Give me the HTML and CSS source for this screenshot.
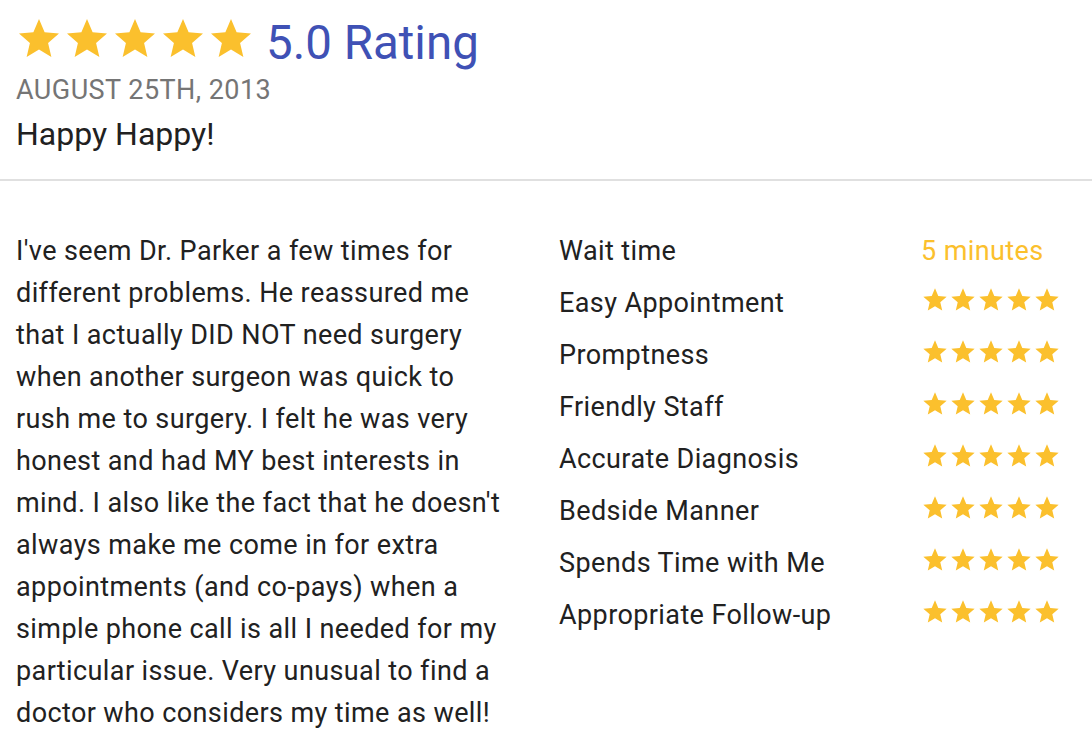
FILE: index.html
```html
<!DOCTYPE html>
<html lang="en">
  <head>
    <meta charset="UTF-8" />
    <meta name="viewport" content="width=device-width, initial-scale=1.0" />
    <title>Review</title>
    <link rel="stylesheet" href="styles.css">
  </head>
  <body>
    <!-- star icon used everywhere -->
    <svg class="defs" width="0" height="0">
      <symbol id="star" viewBox="0 0 24 24">
        <path d="M12 17.27L18.18 21l-1.64-7.03L22 9.24l-7.19-.61L12 2 9.19 8.63 2 9.24l5.46 4.73L5.82 21z" />
      </symbol>
    </svg>

    <div class="review-head">
      <div class="rating">
        <div class="stars big">
          <svg><use href="#star" /></svg>
          <svg><use href="#star" /></svg>
          <svg><use href="#star" /></svg>
          <svg><use href="#star" /></svg>
          <svg><use href="#star" /></svg>
        </div>
        <span class="rating-text">5.0 Rating</span>
      </div>
      <div class="date">AUGUST 25TH, 2013</div>
      <h2 class="title">Happy Happy!</h2>
    </div>

    <div class="review-body">
      <p class="comment">
        I've seem Dr. Parker a few times for different problems. He reassured me that I actually DID NOT need surgery when another surgeon was quick to rush me to surgery. I felt he was very honest and had MY best interests in mind. I also like the fact that he doesn't always make me come in for extra appointments (and co-pays) when a simple phone call is all I needed for my particular issue. Very unusual to find a doctor who considers my time as well!
      </p>

      <div class="scores" id="scores">
        <div class="label">Wait time</div>
        <div class="value">5 minutes</div>
      </div>
    </div>

    <script>
      document.addEventListener("DOMContentLoaded", function () {
        const scores = [
          ["Easy Appointment", 5],
          ["Promptness", 5],
          ["Friendly Staff", 5],
          ["Accurate Diagnosis", 5],
          ["Bedside Manner", 5],
          ["Spends Time with Me", 5],
          ["Appropriate Follow-up", 5],
        ];
        const list = document.getElementById("scores");

        scores.forEach(([name, count]) => {
          const label = document.createElement("div");
          label.classList.add("label");
          label.textContent = name;

          const stars = document.createElement("div");
          stars.classList.add("stars", "small");
          let html = "";
          for (let i = 0; i < count; i++) {
            html += '<svg><use href="#star" /></svg>';
          }
          stars.innerHTML = html;

          list.appendChild(label);
          list.appendChild(stars);
        });
      });
    </script>
  </body>
</html>
```

FILE: styles.css
```css
body {
  font-family: Roboto, "Noto Sans", sans-serif;
  margin: 0;
  padding: 0;
  background-color: #fff;
  color: #212121;
}

.defs {
  position: absolute;
}

.stars {
  display: flex;
  fill: #fbc02d;
}

.stars.big svg {
  width: 48px;
  height: 48px;
}

.stars.small svg {
  width: 28px;
  height: 28px;
}

.review-head {
  padding: 15px 16px 25px 15px;
  border-bottom: 2px solid #e0e0e0;
}

.rating {
  display: flex;
  align-items: flex-start;
}

.rating-text {
  margin-left: 11px;
  font-size: 47.5px;
  line-height: 56px;
  color: #3f51b5;
}

.date {
  margin-top: 3px;
  margin-left: 1px;
  font-size: 27px;
  line-height: 32px;
  letter-spacing: 0.45px;
  color: #757575;
}

.title {
  margin: 8px 0 0 1px;
  font-size: 32px;
  line-height: 40px;
  font-weight: 400;
}

.review-body {
  display: grid;
  grid-template-columns: 490px 502px;
  column-gap: 53px;
  padding: 49px 16px 0;
}

.comment {
  margin: 0;
  font-size: 27px;
  line-height: 42px;
  letter-spacing: 0.4px;
}

.scores {
  display: grid;
  grid-template-columns: 1fr 140px;
  row-gap: 10px;
  align-content: start;
  font-size: 27px;
  line-height: 42px;
  letter-spacing: 0.4px;
}

.value {
  color: #fbc02d;
}

.scores .stars {
  margin-top: 4px;
  align-self: start;
}
```
